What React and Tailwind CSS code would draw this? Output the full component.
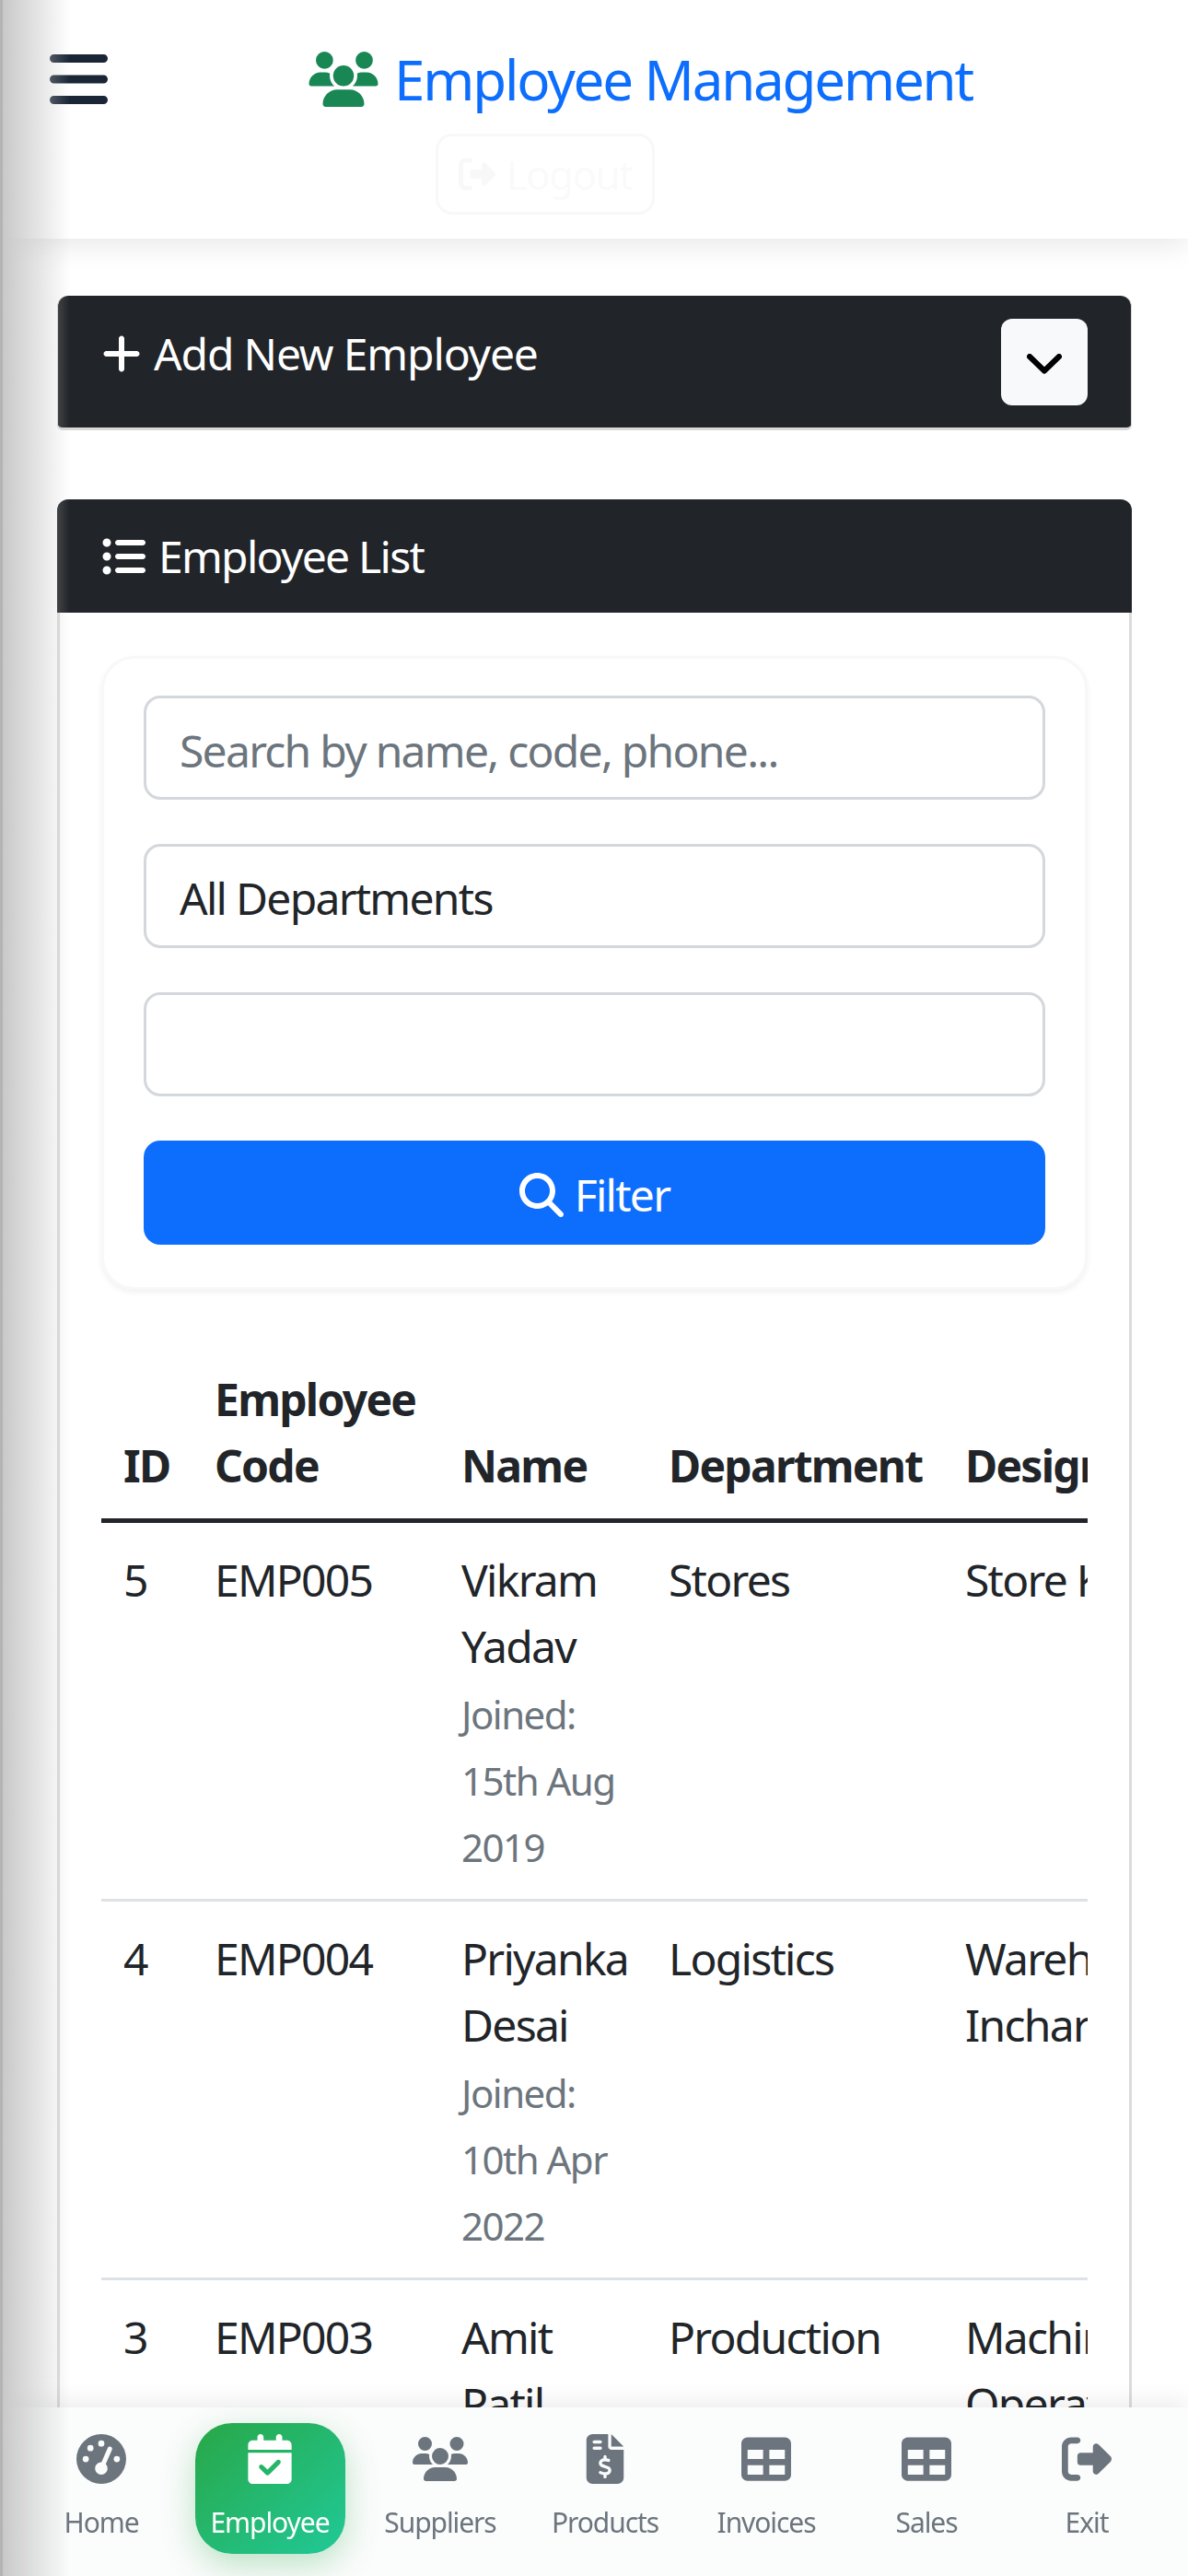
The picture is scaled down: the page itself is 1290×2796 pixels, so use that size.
import React from "react";
import {
  FaBars,
  FaUsers,
  FaPlus,
  FaListUl,
  FaMagnifyingGlass,
  FaRightFromBracket,
  FaGaugeHigh,
  FaCalendarCheck,
  FaFileInvoiceDollar,
  FaTable,
} from "react-icons/fa6";

const employees = [
  { id: 5, code: "EMP005", name: "Vikram Yadav", joined: "15th Aug 2019", dept: "Stores", role: "Store Keeper" },
  { id: 4, code: "EMP004", name: "Priyanka Desai", joined: "10th Apr 2022", dept: "Logistics", role: "Warehouse Incharge" },
  { id: 3, code: "EMP003", name: "Amit Patil", joined: "3rd Jan 2021", dept: "Production", role: "Machine Operator" },
];

const navItems = [
  { label: "Home", icon: FaGaugeHigh, w: "w-[180px]" },
  { label: "Employee", icon: FaCalendarCheck, w: "w-[186px]", active: true },
  { label: "Suppliers", icon: FaUsers, w: "w-[184px]" },
  { label: "Products", icon: FaFileInvoiceDollar, w: "w-[174px]" },
  { label: "Invoices", icon: FaTable, w: "w-[176px]" },
  { label: "Sales", icon: FaTable, w: "w-[172px]" },
  { label: "Exit", icon: FaRightFromBracket, w: "w-[176px]" },
];

function Header() {
  return (
    <header className="relative z-10 h-[259px] bg-white shadow-[0_6px_30px_rgba(0,0,0,0.1)]">
      <div className="flex h-[145px] items-start pl-[54px] pt-[50px]">
        <FaBars className="h-[72px] w-[63px] text-[#1a2636]" />
        <h1 className="ml-[218px] flex items-center text-[60px] leading-[72px] text-[#0d6efd]">
          <FaUsers className="mr-[17px] h-[60px] w-[76px] text-[#198754]" />
          Employee Management
        </h1>
      </div>
      <div className="ml-[473px] flex h-[88px] w-[238px] items-center justify-center gap-[12px] rounded-[18px] border-[3px] border-[#6c757d]/5 text-[44px] text-[#6c757d]/5">
        <FaRightFromBracket className="h-[40px] w-[40px]" />
        <span>Logout</span>
      </div>
    </header>
  );
}

function FilterCard() {
  const field =
    "block h-[113px] w-full rounded-[18px] border-[3px] border-[#d4d7db] bg-white px-[36px] pt-[5px] text-[48px] text-[#212529] outline-none";
  return (
    <div className="flex flex-col gap-[48px] rounded-[36px] border-[3px] border-[#f8f8f8] bg-white px-[43px] pb-[46px] pt-[40px] shadow-[0_3px_6px_rgba(0,0,0,0.06)]">
      <input className={`${field} placeholder:text-[#6c757d]`} placeholder="Search by name, code, phone..." readOnly />
      <select className={`${field} appearance-none`} defaultValue="all">
        <option value="all">All Departments</option>
      </select>
      <div className={field} />
      <button className="flex h-[113px] items-center justify-center gap-[12px] rounded-[18px] bg-[#0d6efd] pt-[4px] text-[48px] text-white">
        <FaMagnifyingGlass className="h-[48px] w-[48px]" />
        <span>Filter</span>
      </button>
    </div>
  );
}

function EmployeeTable() {
  const th = "border-b-[5px] border-[#212529] px-[24px] pb-[21px] pt-[24px] text-left align-bottom text-[48px] font-bold leading-[72px] text-[#212529]";
  const td = "border-b-[3px] border-[#dee2e6] px-[24px] pb-[20px] pt-[26px] align-top text-[48px] leading-[72px] text-[#212529]";
  return (
    <div className="mt-[59px] overflow-hidden">
      <table className="w-[1430px] table-fixed border-collapse">
        <colgroup>
          <col className="w-[99px]" />
          <col className="w-[268px]" />
          <col className="w-[225px]" />
          <col className="w-[322px]" />
          <col className="w-[516px]" />
        </colgroup>
        <thead>
          <tr>
            <th className={th}>ID</th>
            <th className={th}>Employee Code</th>
            <th className={th}>Name</th>
            <th className={th}>Department</th>
            <th className={th}>Designation</th>
          </tr>
        </thead>
        <tbody>
          {employees.map((emp) => (
            <tr key={emp.id}>
              <td className={td}>{emp.id}</td>
              <td className={td}>{emp.code}</td>
              <td className={td}>
                {emp.name}
                <div className="pt-[2px] text-[42px] text-[#6c757d]">Joined: {emp.joined}</div>
              </td>
              <td className={td}>{emp.dept}</td>
              <td className={td}>
                <div className="w-[320px]">{emp.role}</div>
              </td>
            </tr>
          ))}
        </tbody>
      </table>
    </div>
  );
}

function BottomNav() {
  return (
    <nav className="fixed inset-x-0 bottom-0 z-20 flex h-[183px] items-start bg-[#fbfcfc] pl-[20px] pt-[17px] shadow-[0_-6px_24px_rgba(0,0,0,0.08)]">
      {navItems.map(({ label, icon: Icon, w, active }) => (
        <div key={label} className={`flex ${w} shrink-0 justify-center`}>
          <div
            className={`flex h-[142px] w-[163px] flex-col items-center rounded-[40px] pt-[12px] text-[30px] leading-[50px] ${
              active
                ? "bg-gradient-to-br from-[#28a745] to-[#20c997] text-white shadow-[0_12px_36px_rgba(40,167,69,0.3)]"
                : "text-[#6c757d]"
            }`}
          >
            <Icon className="h-[54px] w-[60px]" />
            <span className="mt-[17px] whitespace-nowrap">{label}</span>
          </div>
        </div>
      ))}
    </nav>
  );
}

export default function App() {
  return (
    <div className="relative h-[2796px] overflow-hidden bg-white font-['Noto_Sans',sans-serif] [&_*]:tracking-[-0.036em]">
      <div className="pointer-events-none fixed inset-y-0 left-0 z-30 w-[76px] border-l-[3px] border-[#b4b4b4] bg-gradient-to-r from-[#c8c8c8] to-transparent" />
      <Header />
      <main className="pl-[62px] pr-[61px] pt-[62px]">
        <section className="flex h-[146px] items-center justify-between rounded-t-[12px] rounded-b-[6px] border-x-[1px] border-b-[3px] border-[#d8d8d8] bg-[#212529] pl-[48px] pr-[47px]">
          <h2 className="flex items-center gap-[14px] pb-[17px] text-[48px] leading-[72px] text-white !tracking-[-0.024em]">
            <FaPlus className="h-[48px] w-[42px]" />
            Add New Employee
          </h2>
          <button className="flex h-[94px] w-[94px] items-center justify-center rounded-[12px] bg-[#f8f9fa] pt-[4px]">
            <svg viewBox="0 0 38 22" className="h-[22px] w-[38px]">
              <path d="M3 3 L19 18.5 L35 3" fill="none" stroke="#000" strokeWidth="6" strokeLinecap="round" strokeLinejoin="round" />
            </svg>
          </button>
        </section>
        <section className="mt-[75px] rounded-t-[12px] border-x-[3px] border-[#dcdcdc]">
          <h2 className="-mx-[3px] flex h-[123px] items-center gap-[14px] rounded-t-[12px] bg-[#212529] pl-[48px] text-[48px] leading-[72px] text-white">
            <FaListUl className="h-[48px] w-[48px]" />
            Employee List
          </h2>
          <div className="p-[45px] pt-[47px]">
            <FilterCard />
            <EmployeeTable />
          </div>
        </section>
      </main>
      <BottomNav />
    </div>
  );
}
